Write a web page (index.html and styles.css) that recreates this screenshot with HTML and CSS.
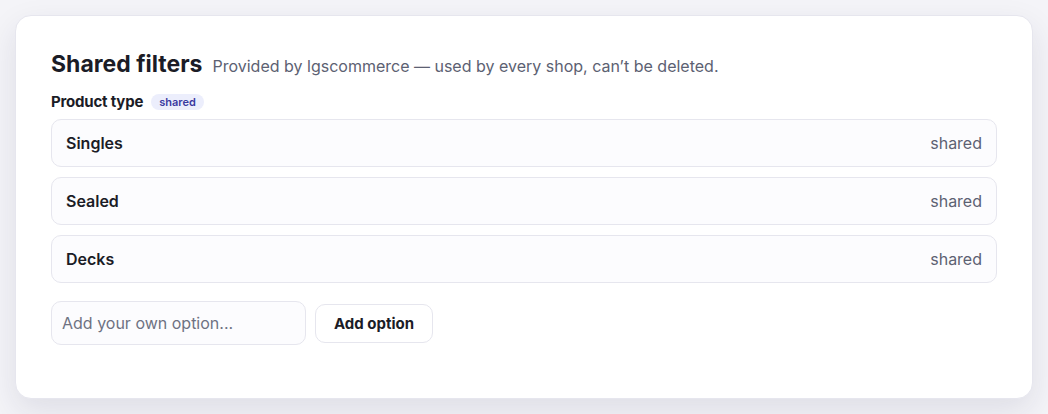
FILE: index.html
```html
<!DOCTYPE html>
<html lang="en">

<head>
    <meta charset="UTF-8">
    <meta name="viewport" content="width=device-width, initial-scale=1.0">
    <title>Shared filters</title>
    <link rel="stylesheet" href="styles.css">
</head>

<body>
    <div class="card">
        <div class="head">
            <h2>Shared filters</h2>
            <span class="sub">Provided by lgscommerce — used by every shop, can’t be deleted.</span>
        </div>
        <div class="group-label">
            Product type
            <span class="badge">shared</span>
        </div>
        <div class="options">
            <div class="option">
                <span class="name">Singles</span>
                <span class="tag">shared</span>
            </div>
            <div class="option">
                <span class="name">Sealed</span>
                <span class="tag">shared</span>
            </div>
            <div class="option">
                <span class="name">Decks</span>
                <span class="tag">shared</span>
            </div>
        </div>
        <div class="add-row">
            <input type="text" placeholder="Add your own option...">
            <button>Add option</button>
        </div>
    </div>
</body>

</html>
```

FILE: styles.css
```css
body {
    margin: 0;
    padding: 15px;
    background-color: #f4f4f8;
    font-family: Inter, "Noto Sans", sans-serif;
    color: #1b1c26;
}

.card {
    background-color: #fff;
    border: 1px solid #e6e6ee;
    border-radius: 16px;
    box-shadow: 0 12px 32px rgba(30, 30, 70, 0.1);
    padding: 34px 35px 53px;
}

.head {
    display: flex;
    align-items: baseline;
    gap: 10px;
}

.head h2 {
    margin: 0;
    font-size: 23px;
    font-weight: 700;
}

.sub {
    font-size: 16px;
    color: #5c6172;
}

.group-label {
    display: flex;
    align-items: center;
    gap: 8px;
    margin-top: 14px;
    font-size: 15px;
    font-weight: 700;
    letter-spacing: -0.2px;
}

.badge {
    font-size: 11px;
    font-weight: 600;
    letter-spacing: 0;
    color: #3a3aa0;
    background-color: #eceefc;
    border-radius: 8px;
    padding: 1px 8px;
}

.options {
    display: flex;
    flex-direction: column;
    gap: 10px;
    margin-top: 8px;
}

.option {
    display: flex;
    justify-content: space-between;
    align-items: center;
    height: 46px;
    padding: 0 14px;
    background-color: #fcfcfe;
    border: 1px solid #e6e6ee;
    border-radius: 10px;
    font-size: 16px;
}

.name {
    font-weight: 600;
}

.tag {
    color: #5c6172;
}

.add-row {
    display: flex;
    align-items: center;
    gap: 9px;
    margin-top: 18px;
}

.add-row input {
    width: 255px;
    height: 44px;
    box-sizing: border-box;
    padding: 0 10px;
    border: 1px solid #e6e6ee;
    border-radius: 10px;
    background-color: #fcfcfe;
    font-family: inherit;
    font-size: 16px;
    color: #1b1c26;
}

.add-row input::placeholder {
    color: #6e7282;
}

.add-row button {
    height: 39px;
    padding: 0 18px;
    border: 1px solid #e6e6ee;
    border-radius: 10px;
    background-color: #fff;
    font-family: inherit;
    font-size: 15px;
    font-weight: 700;
    color: #1b1c26;
}
```
